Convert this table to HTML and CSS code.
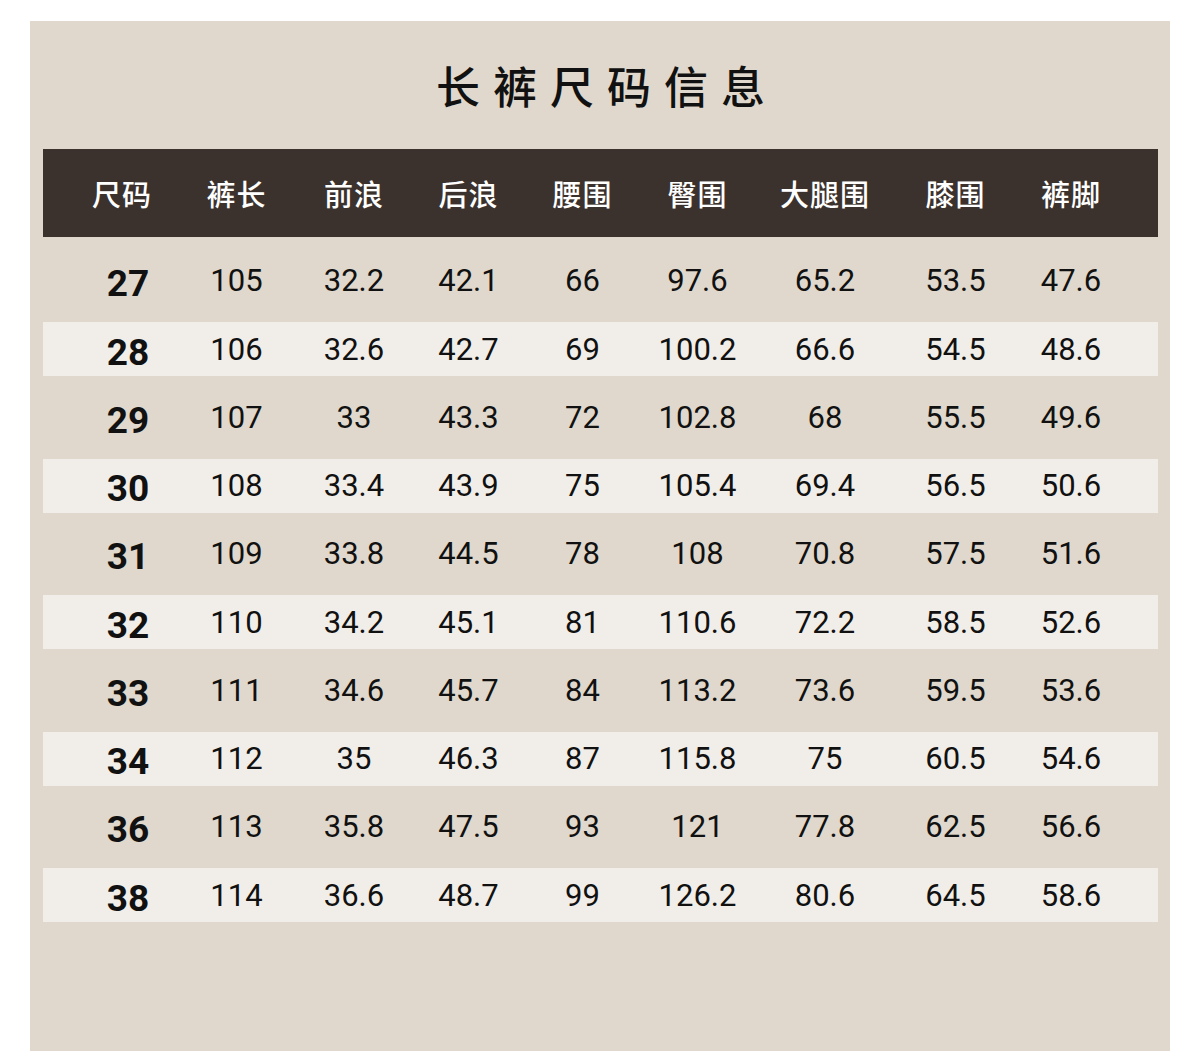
FILE: index.html
```html
<!DOCTYPE html>
<html lang="zh-CN">
<head>
<meta charset="utf-8">
<title>长裤尺码信息</title>
<link rel="stylesheet" href="styles.css">
</head>
<body>
<div class="panel">
  <h1 class="title">长裤尺码信息</h1>
  <div class="table">
    <div class="row head">
      <div>尺码</div><div>裤长</div><div>前浪</div><div>后浪</div><div>腰围</div><div>臀围</div><div>大腿围</div><div>膝围</div><div>裤脚</div>
    </div>
    <div class="body">
      <div class="row"><div class="size">27</div><div>105</div><div>32.2</div><div>42.1</div><div>66</div><div>97.6</div><div>65.2</div><div>53.5</div><div>47.6</div></div>
      <div class="row alt"><div class="size">28</div><div>106</div><div>32.6</div><div>42.7</div><div>69</div><div>100.2</div><div>66.6</div><div>54.5</div><div>48.6</div></div>
      <div class="row"><div class="size">29</div><div>107</div><div>33</div><div>43.3</div><div>72</div><div>102.8</div><div>68</div><div>55.5</div><div>49.6</div></div>
      <div class="row alt"><div class="size">30</div><div>108</div><div>33.4</div><div>43.9</div><div>75</div><div>105.4</div><div>69.4</div><div>56.5</div><div>50.6</div></div>
      <div class="row"><div class="size">31</div><div>109</div><div>33.8</div><div>44.5</div><div>78</div><div>108</div><div>70.8</div><div>57.5</div><div>51.6</div></div>
      <div class="row alt"><div class="size">32</div><div>110</div><div>34.2</div><div>45.1</div><div>81</div><div>110.6</div><div>72.2</div><div>58.5</div><div>52.6</div></div>
      <div class="row"><div class="size">33</div><div>111</div><div>34.6</div><div>45.7</div><div>84</div><div>113.2</div><div>73.6</div><div>59.5</div><div>53.6</div></div>
      <div class="row alt"><div class="size">34</div><div>112</div><div>35</div><div>46.3</div><div>87</div><div>115.8</div><div>75</div><div>60.5</div><div>54.6</div></div>
      <div class="row"><div class="size">36</div><div>113</div><div>35.8</div><div>47.5</div><div>93</div><div>121</div><div>77.8</div><div>62.5</div><div>56.6</div></div>
      <div class="row alt"><div class="size">38</div><div>114</div><div>36.6</div><div>48.7</div><div>99</div><div>126.2</div><div>80.6</div><div>64.5</div><div>58.6</div></div>
    </div>
  </div>
</div>
</body>
</html>
```

FILE: styles.css
```css
html, body {
  margin: 0;
  padding: 0;
  background: #ffffff;
}

body {
  padding: 21px 30px 0 30px;
  height: 1051px;
  box-sizing: border-box;
  overflow: hidden;
}

.panel {
  background: #e0d8cc;
  height: 1030px;
  padding: 0 12px 0 13px;
}

.title {
  margin: 0;
  height: 128px;
  display: flex;
  align-items: center;
  justify-content: center;
  padding-left: 13px;
  box-sizing: border-box;
  font-family: "Noto Sans CJK SC", sans-serif;
  font-weight: 500;
  font-size: 44px;
  letter-spacing: 13px;
  color: #111111;
}

.table {
  display: flex;
  flex-direction: column;
}

.row {
  display: flex;
  align-items: center;
  padding-left: 24px;
  height: 54px;
  font-family: Roboto, "Noto Sans", sans-serif;
  font-size: 31px;
  color: #111111;
  white-space: nowrap;
}

.row > div {
  width: 110px;
  flex: none;
  text-align: center;
}

.row > div:nth-child(2) { margin-left: 4.5px; }
.row > div:nth-child(3) { margin-left: 7.5px; }
.row > div:nth-child(4) { margin-left: 4.5px; }
.row > div:nth-child(5) { margin-left: 4px; }
.row > div:nth-child(6) { margin-left: 5px; }
.row > div:nth-child(7) { margin-left: 17.5px; }
.row > div:nth-child(8) { margin-left: 20.5px; }
.row > div:nth-child(9) { margin-left: 5.5px; }

.row.head {
  height: 88px;
  background: #3c322d;
  color: #ffffff;
  font-family: "Noto Sans CJK SC", sans-serif;
  font-weight: 500;
  font-size: 29px;
  letter-spacing: 1px;
}

.body {
  display: flex;
  flex-direction: column;
  gap: 14.25px;
  padding-top: 16.75px;
}

.row.alt {
  background: #f1eee9;
}

.row > .size {
  font-weight: 700;
  font-size: 37px;
  padding-left: 12px;
  box-sizing: border-box;
  padding-top: 6px;
}
```
